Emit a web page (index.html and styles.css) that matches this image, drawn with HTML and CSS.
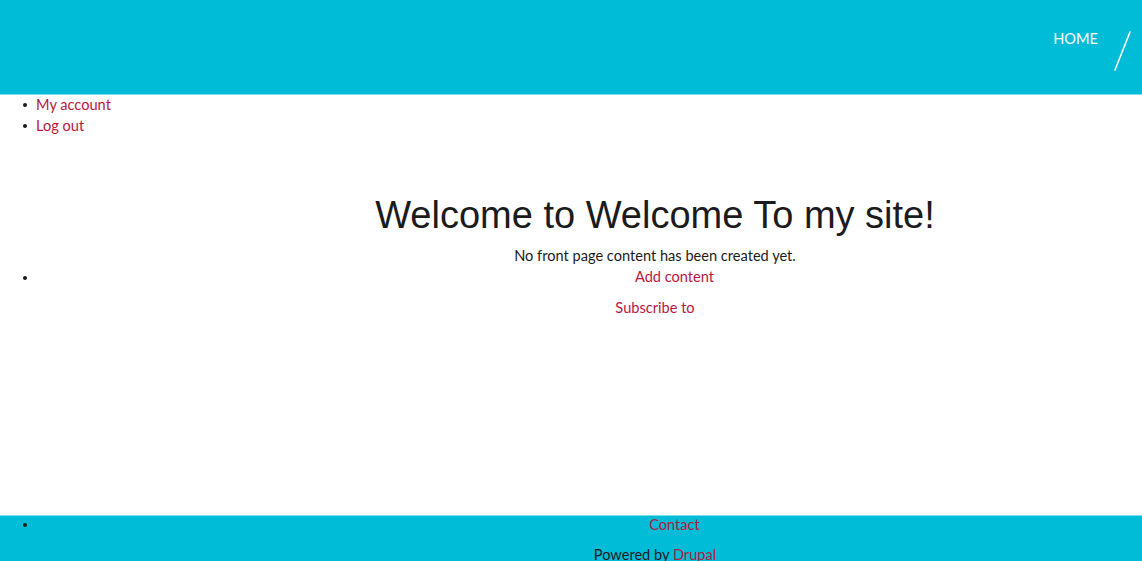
FILE: index.html
```html
<!DOCTYPE html>
<html lang="en">
<head>
<meta charset="utf-8">
<title>Welcome To my site!</title>
<link rel="stylesheet" href="styles.css">
</head>
<body>
<header class="site-header">
  <nav class="main-nav">
    <a class="nav-link" href="#">HOME</a>
    <svg class="nav-slash" width="22" height="44" viewBox="0 0 22 44" aria-hidden="true">
      <line x1="18" y1="2" x2="3" y2="40" stroke="#ffffff" stroke-width="1.6" stroke-linecap="round"/>
    </svg>
  </nav>
</header>
<ul class="account-menu">
  <li><a href="#">My account</a></li>
  <li><a href="#">Log out</a></li>
</ul>
<main class="content">
  <h1 class="page-title">Welcome to Welcome To my site!</h1>
  <p class="empty-text">No front page content has been created yet.</p>
  <ul class="action-list">
    <li><a href="#">Add content</a></li>
  </ul>
  <p class="feed"><a href="#">Subscribe to</a></p>
</main>
<footer class="site-footer">
  <ul class="footer-menu">
    <li><a href="#">Contact</a></li>
  </ul>
  <p class="powered">Powered by <a href="#">Drupal</a></p>
</footer>
</body>
</html>
```

FILE: styles.css
```css
* { box-sizing: border-box; }

html, body {
  margin: 0;
  padding: 0;
}

body {
  font-family: Lato, "Noto Sans", sans-serif;
  font-size: 14.6px;
  line-height: 21px;
  color: #1b1b1b;
  background: #ffffff;
}

a {
  color: #b8173e;
  text-decoration: none;
}

.site-header {
  background: #00bcd7;
  height: 95px;
  border-bottom: 1px solid #7fdcea;
}

.main-nav {
  display: flex;
  justify-content: flex-end;
  align-items: flex-start;
  padding-right: 8px;
}

.nav-link {
  color: #ffffff;
  font-size: 14.6px;
  line-height: 21px;
  margin-top: 28px;
  margin-right: 14px;
}

.nav-slash {
  margin-top: 30px;
}

.account-menu,
.action-list,
.footer-menu {
  list-style: none;
  margin: 0;
  padding: 0 0 0 36px;
}

.account-menu li,
.action-list li,
.footer-menu li {
  position: relative;
}

.account-menu li::before,
.action-list li::before,
.footer-menu li::before {
  content: "";
  position: absolute;
  left: -13px;
  top: 9px;
  width: 4px;
  height: 4px;
  border-radius: 50%;
  background: #1b1b1b;
}

.account-menu {
  margin-top: -1px;
}

.content {
  padding-top: 57px;
  padding-bottom: 197px;
}

.page-title {
  font-family: "Liberation Sans", Arial, sans-serif;
  font-weight: 400;
  font-size: 38px;
  line-height: 44px;
  color: #1b1b1b;
  margin: 0;
  padding-left: 168px;
  text-align: center;
}

.empty-text {
  margin: 8px 0 0;
  padding-left: 168px;
  text-align: center;
}

.action-list li {
  padding-left: 171px;
  text-align: center;
}

.action-list li::before {
  top: 10px;
}

.feed {
  margin: 10px 0 0;
  padding-left: 168px;
  text-align: center;
}

.site-footer {
  background: #00bcd7;
  border-top: 1px solid #7fdcea;
  padding-bottom: 20px;
}

.footer-menu {
  margin-top: -2px;
}

.footer-menu li {
  padding-left: 171px;
  text-align: center;
}

.powered {
  margin: 9px 0 0;
  padding-left: 168px;
  text-align: center;
}
```
